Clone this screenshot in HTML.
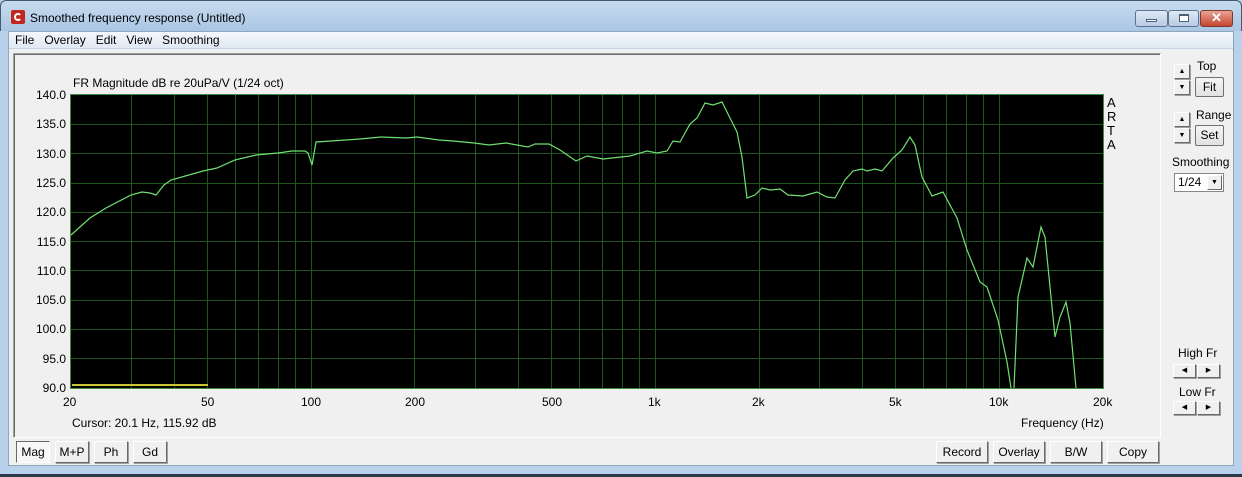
<!DOCTYPE html>
<html><head><meta charset="utf-8"><style>
*{margin:0;padding:0;box-sizing:border-box}
body{width:1242px;height:477px;overflow:hidden;background:#b9d1ea;font-family:"Liberation Sans",Arial,sans-serif;font-size:12px;color:#000;position:relative}
.abs{position:absolute}
.title{left:0;top:0;width:1242px;height:31px;background:linear-gradient(#c7dbef,#aac6e4);border:1px solid #4a5a6a;border-bottom:none;border-radius:6px 6px 0 0}
.client{left:8px;top:31px;width:1226px;height:435px;background:#f0f0f0;border:1px solid #8fa6bf}
.menu{left:9px;top:32px;width:1224px;height:17px;background:linear-gradient(#f5f8fc,#dfe8f3);border-bottom:1px solid #c8d3e0}
.menu span{margin-left:6px;margin-right:4px;font-size:12px;line-height:16px}
.panel{left:13px;top:53px;width:1148px;height:385px;border:1px solid #a0a0a0;border-right-color:#fff;border-bottom-color:#fff;box-shadow:inset 1px 1px 0 #696969}
.btn{position:absolute;background:linear-gradient(#f4f4f4,#e2e2e2);border:1px solid #707070;border-radius:2px;text-align:center;font-size:12px;line-height:19px}
.sbtn{position:absolute;background:#f0f0f0;border:1px solid #fff;border-right-color:#696969;border-bottom-color:#696969;box-shadow:1px 1px 0 #a0a0a0;text-align:center;font-size:12px}
.wb{position:absolute;top:10px;height:17px;border:1px solid #5c7391;border-radius:3px;background:linear-gradient(#dfe9f5,#b8cbe3)}
.lbl{position:absolute;font-size:12px}
</style></head><body>
<div class="abs title"></div>
<div class="abs" style="left:11px;top:10px;width:14px;height:14px;background:#c0261f;border-radius:2px"><div style="position:absolute;left:3px;top:3px;width:8px;height:8px;border:2px solid #fff;border-right-color:transparent;border-radius:50%"></div></div>
<div class="lbl" style="left:30px;top:11px;font-size:12px">Smoothed frequency response (Untitled)</div>
<div class="wb" style="left:1135px;width:33px"><div style="position:absolute;left:10px;top:8px;width:11px;height:3px;background:#fff;border:1px solid #4c5f78"></div></div>
<div class="wb" style="left:1168px;width:31px"><div style="position:absolute;left:10px;top:3px;width:10px;height:8px;border:1px solid #4c5f78;border-top-width:2px;background:#fff"></div></div>
<div class="wb" style="left:1200px;width:33px;background:linear-gradient(#e9a394,#c5452f);border-color:#7d3a2f;color:#fff;font-weight:bold;text-align:center;line-height:14px;font-size:13px">✕</div>
<div class="abs client"></div>
<div class="abs menu"><span>File</span><span>Overlay</span><span>Edit</span><span>View</span><span>Smoothing</span></div>
<div class="abs panel"></div>

<div class="lbl" style="left:73px;top:76px">FR Magnitude dB re 20uPa/V (1/24 oct)</div>
<div style="position:absolute;left:20px;top:88px;width:46px;text-align:right;font-size:12px">
<div style="position:absolute;right:0;top:0">140.0</div>
<div style="position:absolute;right:0;top:29px">135.0</div>
<div style="position:absolute;right:0;top:59px">130.0</div>
<div style="position:absolute;right:0;top:88px">125.0</div>
<div style="position:absolute;right:0;top:117px">120.0</div>
<div style="position:absolute;right:0;top:147px">115.0</div>
<div style="position:absolute;right:0;top:176px">110.0</div>
<div style="position:absolute;right:0;top:205px">105.0</div>
<div style="position:absolute;right:0;top:234px">100.0</div>
<div style="position:absolute;right:0;top:264px">95.0</div>
<div style="position:absolute;right:0;top:293px">90.0</div>
</div>
<div class="lbl" style="left:63px;top:395px">20</div>
<div class="lbl" style="left:201px;top:395px">50</div>
<div class="lbl" style="left:301px;top:395px">100</div>
<div class="lbl" style="left:405px;top:395px">200</div>
<div class="lbl" style="left:542px;top:395px">500</div>
<div class="lbl" style="left:648px;top:395px">1k</div>
<div class="lbl" style="left:752px;top:395px">2k</div>
<div class="lbl" style="left:889px;top:395px">5k</div>
<div class="lbl" style="left:989px;top:395px">10k</div>
<div class="lbl" style="left:1093px;top:395px">20k</div>
<div class="lbl" style="left:72px;top:416px">Cursor: 20.1 Hz, 115.92 dB</div>
<div class="lbl" style="left:1021px;top:416px">Frequency (Hz)</div>
<div class="lbl" style="left:1107px;top:96px;line-height:14px;font-size:13px">A<br>R<br>T<br>A</div>

<svg class="abs" style="left:0;top:0" width="1242" height="477">
<rect x="70.5" y="94.5" width="1033" height="294" fill="#000" stroke="#3c8c3c"/>
<g stroke="#1d551d" stroke-width="1">
<path d="M71 124.5H1103M71 153.5H1103M71 183.5H1103M71 212.5H1103M71 241.5H1103M71 270.5H1103M71 300.5H1103M71 329.5H1103M71 358.5H1103"/>
<path d="M131.5 95V388M174.5 95V388M207.5 95V388M235.5 95V388M258.5 95V388M278.5 95V388M295.5 95V388M311.5 95V388M414.5 95V388M475.5 95V388M518.5 95V388M551.5 95V388M579.5 95V388M602.5 95V388M622.5 95V388M639.5 95V388M655.5 95V388M759.5 95V388M819.5 95V388M862.5 95V388M895.5 95V388M923.5 95V388M946.5 95V388M966.5 95V388M983.5 95V388M999.5 95V388"/>
</g>
<path d="M72 385H208" stroke="#c8c832" stroke-width="2"/>
<path fill="none" stroke="#70e070" stroke-width="1.2" d="M71 235L90 218L106 208L131 195L142 192L150 193L156 195L164 185L171 180L203 171L217 168L235 160L256 155L278 153L292 151L305 151L308 153L312 165L316 142L331 141L360 139L381 137L406 138L417 137L439 140L453 141L474 143L489 145L506 143L528 147L535 144L549 144L560 150L576 161L587 156L603 159L630 156L647 151L657 153L667 151L673 141L680 142L690 124L697 118L705 103L713 105L722 102L730 118L737 132L742 157L747 198L755 195L762 188L770 190L780 189L788 195L803 196L817 192L827 197L835 198L845 180L853 171L862 169L867 171L875 169L882 171L893 158L902 150L910 137L915 145L922 177L932 196L943 192L957 218L967 250L980 282L987 287L998 320L1007 362L1011 388M1014 388L1018 297L1027 258L1033 267L1041 227L1045 237L1055 337L1060 317L1066 302L1070 323L1076 388"/>
</svg>

<div class="sbtn" style="left:1174px;top:64px;width:16px;height:15px;font-size:7px;line-height:13px">▲</div>
<div class="sbtn" style="left:1174px;top:80px;width:16px;height:15px;font-size:7px;line-height:13px">▼</div>
<div class="lbl" style="left:1197px;top:59px">Top</div>
<div class="btn" style="left:1195px;top:77px;width:29px;height:20px">Fit</div>
<div class="sbtn" style="left:1174px;top:112px;width:16px;height:15px;font-size:7px;line-height:13px">▲</div>
<div class="sbtn" style="left:1174px;top:128px;width:16px;height:15px;font-size:7px;line-height:13px">▼</div>
<div class="lbl" style="left:1196px;top:108px">Range</div>
<div class="btn" style="left:1195px;top:125px;width:29px;height:21px">Set</div>
<div class="lbl" style="left:1172px;top:155px">Smoothing</div>
<div class="abs" style="left:1174px;top:173px;width:50px;height:19px;background:#fff;border:1px solid #828790;font-size:12px;line-height:17px;padding-left:3px">1/24<div class="sbtn" style="right:1px;top:1px;width:15px;height:15px;font-size:7px;line-height:14px;box-shadow:none">▼</div></div>
<div class="lbl" style="left:1178px;top:346px">High Fr</div>
<div class="sbtn" style="left:1173px;top:364px;width:23px;height:14px;font-size:7px;line-height:12px">◀</div>
<div class="sbtn" style="left:1197px;top:364px;width:23px;height:14px;font-size:7px;line-height:12px">▶</div>
<div class="lbl" style="left:1179px;top:385px">Low Fr</div>
<div class="sbtn" style="left:1173px;top:401px;width:23px;height:14px;font-size:7px;line-height:12px">◀</div>
<div class="sbtn" style="left:1197px;top:401px;width:23px;height:14px;font-size:7px;line-height:12px">▶</div>

<div class="sbtn" style="left:16px;top:441px;width:34px;height:22px;line-height:20px;background:#f7f7f7;border-color:#696969 #fff #fff #696969;box-shadow:none">Mag</div>
<div class="sbtn" style="left:55px;top:441px;width:34px;height:22px;line-height:20px">M+P</div>
<div class="sbtn" style="left:94px;top:441px;width:34px;height:22px;line-height:20px">Ph</div>
<div class="sbtn" style="left:133px;top:441px;width:34px;height:22px;line-height:20px">Gd</div>
<div class="sbtn" style="left:936px;top:441px;width:52px;height:22px;line-height:20px">Record</div>
<div class="sbtn" style="left:993px;top:441px;width:52px;height:22px;line-height:20px">Overlay</div>
<div class="sbtn" style="left:1050px;top:441px;width:52px;height:22px;line-height:20px">B/W</div>
<div class="sbtn" style="left:1107px;top:441px;width:52px;height:22px;line-height:20px">Copy</div>
<div class="abs" style="left:0;top:474px;width:1242px;height:3px;background:#2b3a4a"></div>
</body></html>
